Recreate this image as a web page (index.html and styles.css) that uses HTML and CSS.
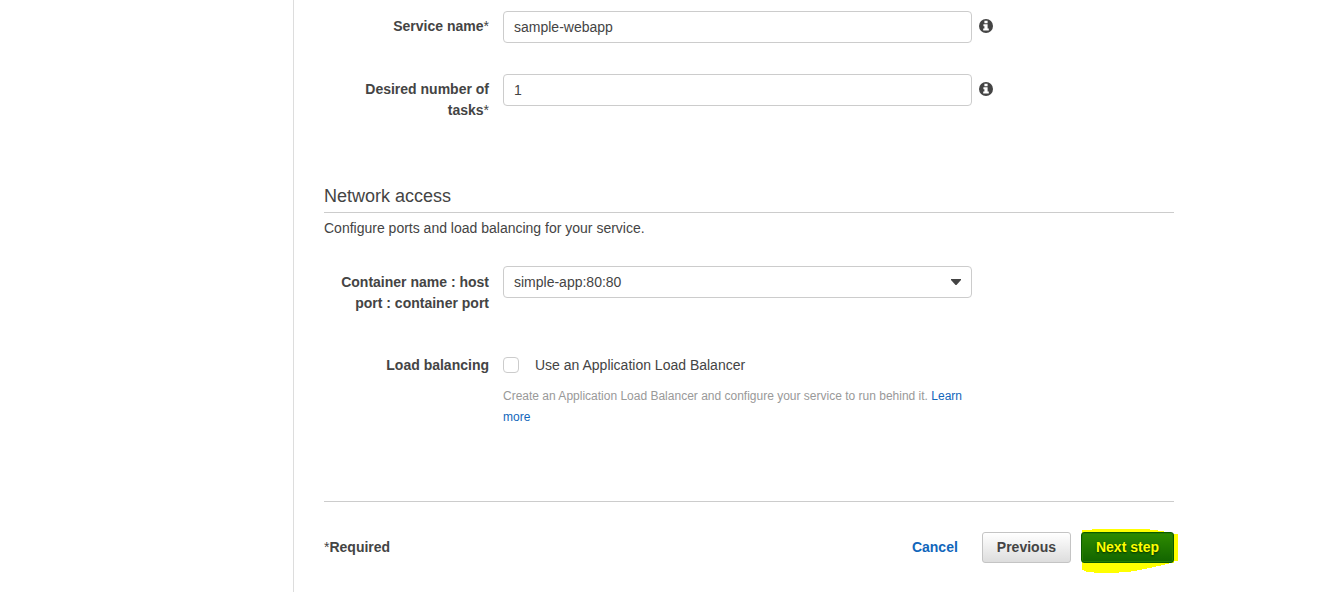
FILE: index.html
```html
<!DOCTYPE html>
<html lang="en">
<head>
<meta charset="utf-8">
<title>Configure service</title>
<link rel="stylesheet" href="styles.css">
</head>
<body>
<svg class="defs" aria-hidden="true">
  <symbol id="info" viewBox="0 0 14 14">
    <circle cx="7" cy="7" r="7" fill="#444"/>
    <path d="M5.4 1.8h3.2v2.4H5.4zM4.4 5.2h4.2v4.4h1.2v2H4.2v-2h1.2V7.2h-1z" fill="#fff"/>
  </symbol>
</svg>
<div class="layout">
  <aside class="sidebar"></aside>
  <main class="main">
    <form class="content">
      <div class="row">
        <label class="label" for="service">Service name<span class="star">*</span></label>
        <input class="field" id="service" type="text" value="sample-webapp">
        <button class="info" type="button" aria-label="About service name"><svg width="14" height="14"><use href="#info"/></svg></button>
      </div>
      <div class="row">
        <label class="label" for="tasks">Desired number of tasks<span class="star">*</span></label>
        <input class="field" id="tasks" type="text" value="1">
        <button class="info" type="button" aria-label="About number of tasks"><svg width="14" height="14"><use href="#info"/></svg></button>
      </div>

      <h2 class="heading">Network access</h2>
      <p class="intro">Configure ports and load balancing for your service.</p>

      <div class="row network">
        <label class="label" for="port">Container name : host port : container port</label>
        <div class="select">
          <select class="field" id="port"><option>simple-app:80:80</option></select>
          <svg class="arrow" width="10" height="6" viewBox="0 0 10 6" aria-hidden="true"><path d="M0 0h10v1L5.5 6h-1L0 1z" fill="#444"/></svg>
        </div>
      </div>
      <div class="row network">
        <span class="label">Load balancing</span>
        <div class="choice">
          <label class="option"><input class="check" type="checkbox">Use an Application Load Balancer</label>
          <p class="hint">Create an Application Load Balancer and configure your service to run behind it. <a class="link" href="#">Learn more</a></p>
        </div>
      </div>

      <footer class="footer">
        <span class="required"><span class="star">*</span>Required</span>
        <a class="link cancel" href="#">Cancel</a>
        <button class="button" type="button">Previous</button>
        <span class="marked">
          <svg class="marker" width="98" height="46" viewBox="0 0 98 46" aria-hidden="true"><path d="M1 1H11V0H69V1H77V2H83V3H87V4H92V5H97V32H93V34H88V35H84V36H80V37H75V38H71V39H66V40H61V41H56V42H50V43H38V44H13V43H5V42H3V41H1Z" fill="#ff0"/></svg>
          <button class="button primary" type="submit">Next step</button>
        </span>
      </footer>
    </form>
  </main>
</div>
</body>
</html>
```
FILE: styles.css
```css
* {
  box-sizing: border-box;
}

body {
  margin: 0;
  background: #fff;
  color: #444;
  font: 14px/21px "Liberation Sans", Arial, sans-serif;
}

.defs {
  display: none;
}

.layout {
  display: flex;
  min-height: 100vh;
}

.sidebar {
  flex: 0 0 293px;
}

.main {
  flex: 1;
  min-width: 0;
  padding: 11px 30px 29px;
  border-left: 1px solid #ddd;
}

.content {
  max-width: 850px;
}

.row {
  display: grid;
  grid-template-columns: 165px minmax(0, 469px) auto;
  column-gap: 14px;
  justify-content: start;
  align-items: start;
  margin-bottom: 31px;
}

.label {
  padding: 5px 0 0 12px;
  font-weight: bold;
  text-align: right;
}

.network {
  margin-bottom: 35px;
}

.network .label,
.choice {
  padding-top: 6px;
}

.star {
  font-weight: normal;
}

.field {
  width: 100%;
  height: 32px;
  padding: 0 10px;
  border: 1px solid #ccc;
  border-radius: 4px;
  background: #fff;
  color: #444;
  font: inherit;
}

.info {
  display: flex;
  margin: 8px 0 0 -7px;
  padding: 0;
  border: 0;
  background: none;
}

.heading {
  margin: 63px 0 0;
  padding-bottom: 4px;
  border-bottom: 1px solid #ccc;
  font-size: 18px;
  font-weight: normal;
  line-height: 24px;
}

.intro {
  margin: 5px 0 27px;
}

.select {
  position: relative;
}

select.field {
  display: block;
  appearance: none;
}

.arrow {
  position: absolute;
  top: 13px;
  right: 11px;
  pointer-events: none;
}

.option {
  display: flex;
  align-items: flex-start;
  gap: 16px;
}

.check {
  appearance: none;
  width: 16px;
  height: 16px;
  margin: 2px 0 0;
  border: 1px solid #ccc;
  border-radius: 4px;
  background: #fff;
}

.hint {
  margin: 10px 0 0;
  color: #999;
  font-size: 12px;
}

.link {
  color: #1166bb;
  text-decoration: none;
}

.footer {
  display: flex;
  align-items: center;
  margin-top: 73px;
  padding-top: 30px;
  border-top: 1px solid #ccc;
  font-weight: bold;
}

.required {
  margin-right: auto;
}

.cancel {
  margin-right: 24px;
}

.button {
  height: 31px;
  padding: 0 14px;
  border: 1px solid #c4c4c4;
  border-radius: 3px;
  background: linear-gradient(#fff, #ddd);
  color: #444;
  font: inherit;
}

.marked {
  position: relative;
  display: flex;
  margin-left: 10px;
}

.marker {
  position: absolute;
  top: -3px;
  left: 0;
}

.primary {
  position: relative;
  border-color: #0b5a00;
  background: linear-gradient(#2e8b00, #126400);
  color: #ff0;
  text-shadow: 0 1px 2px #032800;
  box-shadow: inset 0 0 0 1px #267d00;
}
```
